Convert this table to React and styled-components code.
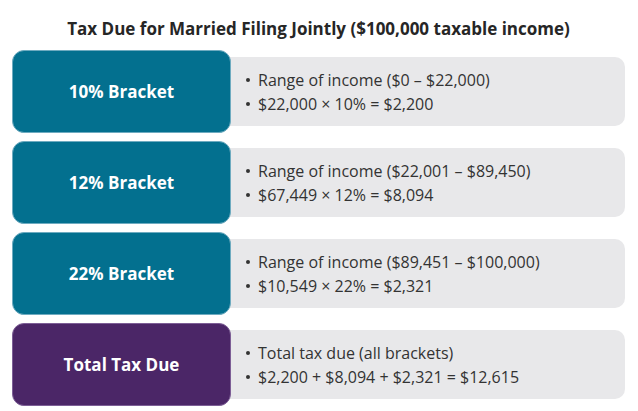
import React from "react";
import styled, { createGlobalStyle } from "styled-components";

const GlobalStyle = createGlobalStyle`
  html, body {
    margin: 0;
    padding: 0;
    background: #ffffff;
  }
  body {
    font-family: "Open Sans", "Liberation Sans", Arial, sans-serif;
  }
`;

const Page = styled.div`
  width: 638px;
  height: 411px;
  box-sizing: border-box;
  padding: 18px 13px 0 12px;
  overflow: hidden;
`;

const Title = styled.h1`
  margin: 0 0 10px;
  text-align: center;
  font-size: 17px;
  line-height: 22px;
  font-weight: 700;
  color: #262626;
`;

const Rows = styled.div`
  display: flex;
  flex-direction: column;
  gap: 8px;
`;

const Row = styled.div`
  display: flex;
  align-items: center;
  height: 83px;
`;

const Label = styled.div`
  position: relative;
  z-index: 1;
  flex: 0 0 219px;
  height: 83px;
  box-sizing: border-box;
  display: flex;
  align-items: center;
  justify-content: center;
  border-radius: 12px;
  border: 1px solid ${(p) => (p.$total ? "#7d5e96" : "#6eabc0")};
  background: ${(p) => (p.$total ? "#4b2667" : "#03708f")};
  color: #ffffff;
  font-size: 17px;
  font-weight: 700;
`;

const Card = styled.div`
  flex: 1;
  height: 69px;
  margin-left: -12px;
  padding-left: 27px;
  box-sizing: border-box;
  display: flex;
  flex-direction: column;
  justify-content: center;
  background: #e8e8ea;
  border-radius: 10px;
`;

const Line = styled.div`
  display: flex;
  align-items: center;
  font-size: 16px;
  line-height: 24px;
  color: #333333;
`;

const Bullet = styled.span`
  width: 4px;
  height: 4px;
  margin: 1px 8px 0 0;
  border-radius: 50%;
  background: #333333;
  flex: none;
`;

const rows = [
  {
    label: "10% Bracket",
    lines: ["Range of income ($0 – $22,000)", "$22,000 × 10% = $2,200"],
  },
  {
    label: "12% Bracket",
    lines: ["Range of income ($22,001 – $89,450)", "$67,449 × 12% = $8,094"],
  },
  {
    label: "22% Bracket",
    lines: ["Range of income ($89,451 – $100,000)", "$10,549 × 22% = $2,321"],
  },
  {
    label: "Total Tax Due",
    total: true,
    lines: ["Total tax due (all brackets)", "$2,200 + $8,094 + $2,321 = $12,615"],
  },
];

export default function App() {
  return (
    <>
      <GlobalStyle />
      <Page>
        <Title>Tax Due for Married Filing Jointly ($100,000 taxable income)</Title>
        <Rows>
          {rows.map((r) => (
            <Row key={r.label}>
              <Label $total={r.total}>{r.label}</Label>
              <Card>
                {r.lines.map((l) => (
                  <Line key={l}>
                    <Bullet />
                    {l}
                  </Line>
                ))}
              </Card>
            </Row>
          ))}
        </Rows>
      </Page>
    </>
  );
}
